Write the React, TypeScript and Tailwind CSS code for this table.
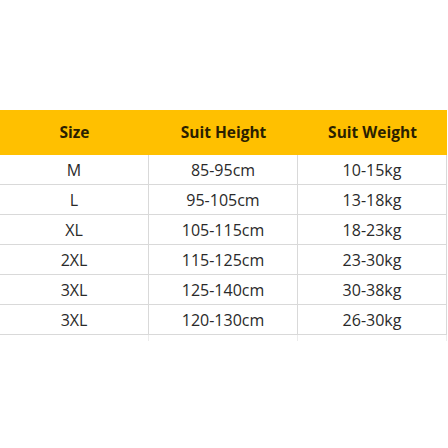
import React from "react";

const rows: [string, string, string][] = [
  ["M", "85-95cm", "10-15kg"],
  ["L", "95-105cm", "13-18kg"],
  ["XL", "105-115cm", "18-23kg"],
  ["2XL", "115-125cm", "23-30kg"],
  ["3XL", "125-140cm", "30-38kg"],
  ["3XL", "120-130cm", "26-30kg"],
];

export default function App() {
  return (
    <div
      className="w-[448px] h-[448px] bg-white pt-[110px]"
      style={{ fontFamily: '"Open Sans", "Noto Sans", sans-serif' }}
    >
      <div className="w-[447px]">
        <div className="grid grid-cols-[149px_149px_149px] h-[45px] bg-[#ffc000] text-[#2b1f00] font-bold text-[15.5px]">
          <div className="flex items-center justify-center">Size</div>
          <div className="flex items-center justify-center">Suit Height</div>
          <div className="flex items-center justify-center">Suit Weight</div>
        </div>
        {rows.map((r, i) => (
          <div
            key={i}
            className="grid grid-cols-[149px_149px_149px] h-[30px] border-b border-[#d9d9d9] text-[16px] text-[#2a2a2a]"
          >
            <div className="flex items-center justify-center border-r border-[#d9d9d9]">{r[0]}</div>
            <div className="flex items-center justify-center border-r border-[#d9d9d9]">{r[1]}</div>
            <div className="flex items-center justify-center border-r border-[#d9d9d9]">{r[2]}</div>
          </div>
        ))}
        <div className="grid grid-cols-[149px_149px_149px] h-[6px]">
          <div className="border-r border-[#ececec]" />
          <div className="border-r border-[#ececec]" />
          <div className="border-r border-[#ececec]" />
        </div>
      </div>
    </div>
  );
}
